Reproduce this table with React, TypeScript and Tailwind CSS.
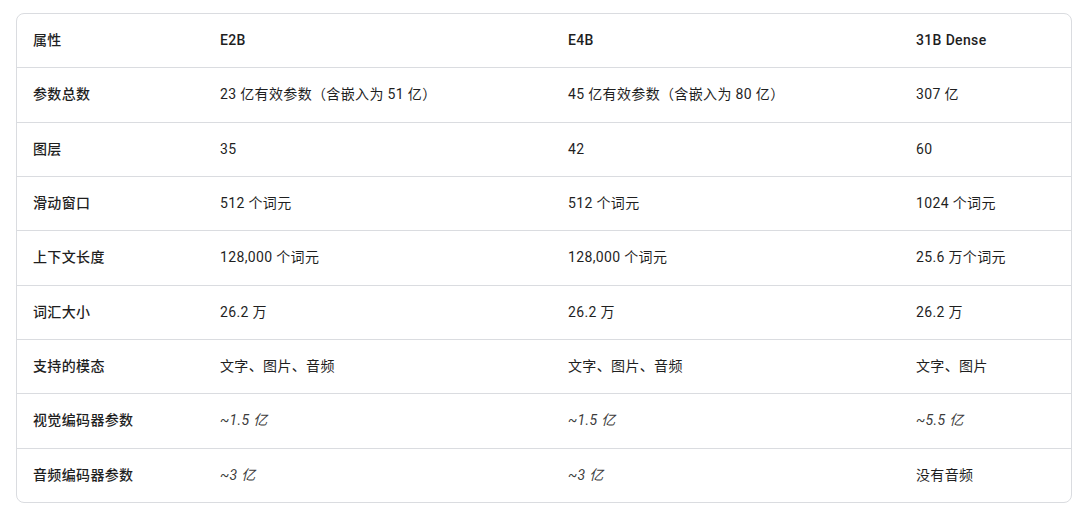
const rows: { label: string; cells: string[]; italic?: boolean }[] = [
  { label: "参数总数", cells: ["23 亿有效参数（含嵌入为 51 亿）", "45 亿有效参数（含嵌入为 80 亿）", "307 亿"] },
  { label: "图层", cells: ["35", "42", "60"] },
  { label: "滑动窗口", cells: ["512 个词元", "512 个词元", "1024 个词元"] },
  { label: "上下文长度", cells: ["128,000 个词元", "128,000 个词元", "25.6 万个词元"] },
  { label: "词汇大小", cells: ["26.2 万", "26.2 万", "26.2 万"] },
  { label: "支持的模态", cells: ["文字、图片、音频", "文字、图片、音频", "文字、图片"] },
  { label: "视觉编码器参数", cells: ["~1.5 亿", "~1.5 亿", "~5.5 亿"], italic: true },
  { label: "音频编码器参数", cells: ["~3 亿", "~3 亿", "没有音频"], italic: true },
];

const cols = "grid grid-cols-[187px_348px_348px_1fr] items-center flex-1";

export default function App() {
  return (
    <div
      className="w-[1080px] h-[508px] bg-white pt-[13px] pl-[16px] pr-[8px] text-[14px] tracking-[0.35px] text-[#1f1f1f]"
      style={{ fontFamily: "Roboto, 'Noto Sans CJK SC', sans-serif" }}
    >
      <div className="h-[490px] w-[1056px] border border-[#dadce0] rounded-[8px] flex flex-col overflow-hidden">
        <div className={cols + " font-medium"}>
          <div className="pl-[16px]">属性</div>
          <div className="pl-[16px]">E2B</div>
          <div className="pl-[16px]">E4B</div>
          <div className="pl-[16px]">31B Dense</div>
        </div>
        {rows.map((r) => (
          <div key={r.label} className={cols + " border-t border-[#dadce0]"}>
            <div className="pl-[16px] font-medium">{r.label}</div>
            {r.cells.map((c, i) => (
              <div
                key={i}
                className={
                  "pl-[16px] " + (r.italic && c.startsWith("~") ? "italic text-[#3c3c3c]" : "")
                }
              >
                {c}
              </div>
            ))}
          </div>
        ))}
      </div>
    </div>
  );
}
